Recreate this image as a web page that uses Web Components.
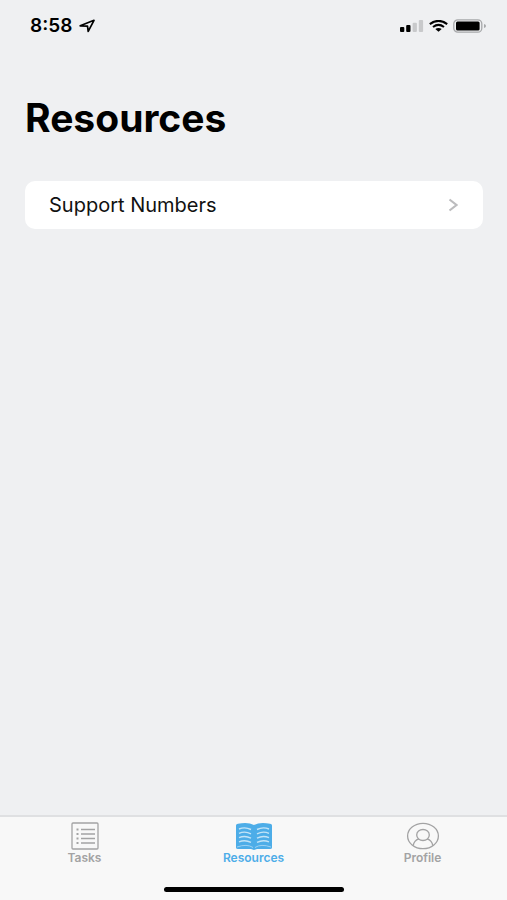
<!DOCTYPE html>
<html lang="en">
<head>
<meta charset="UTF-8">
<meta name="viewport" content="width=device-width, initial-scale=1.0">
<title>Resources</title>
<style>
  body {
    margin: 0;
    background-color: #eff0f2;
    color: #000;
    font-family: Inter, "Liberation Sans", sans-serif;
  }
</style>
</head>
<body>
<app-screen>
  <status-bar slot="status" time="8:58"></status-bar>
  <page-title>Resources</page-title>
  <resource-list>
    <resource-item>Support Numbers</resource-item>
  </resource-list>
  <tab-bar slot="tabs">
    <tab-item icon="tasks">Tasks</tab-item>
    <tab-item icon="resources" active>Resources</tab-item>
    <tab-item icon="profile">Profile</tab-item>
  </tab-bar>
</app-screen>

<script>
const icons = {
  tasks: `
    <svg width="28" height="28" viewBox="0 0 28 28" fill="none" stroke="currentColor" aria-hidden="true">
      <rect x="1" y="1" width="26" height="26" rx="1" stroke-width="1.3"/>
      <path d="M10 7.5h14M10 12h14M10 16.5h14M10 21h14" stroke-width="1.3"/>
      <path d="M5.5 7.5h2M5.5 12h2M5.5 16.5h2M5.5 21h2" stroke-width="2"/>
    </svg>`,
  resources: `
    <svg width="38" height="28" viewBox="0 0 38 28" fill="none" aria-hidden="true">
      <path d="M1 3.5Q1 2 3 1.7Q13-.4 19 3Q25-.4 35 1.7Q37 2 37 3.5V25.5Q37 27 35 27H22L19 28L16 27H3Q1 27 1 25.5Z" fill="currentColor"/>
      <path d="M2 25Q12 21.5 18 25.5M36 25Q26 21.5 20 25.5" stroke="#9ed2f3"/>
      <path d="M4 7Q10 4.5 16 7.5M4 11.3Q10 8.8 16 11.8M4 15.6Q10 13.1 16 16.1M4 19.9Q10 17.4 16 20.4M22 7.5Q28 4.5 34 7M22 11.8Q28 8.8 34 11.3M22 16.1Q28 13.1 34 15.6M22 20.4Q28 17.4 34 19.9" stroke="#c4e4f7" stroke-width="1.4"/>
    </svg>`,
  profile: `
    <svg width="34" height="28" viewBox="0 0 34 28" fill="none" stroke="currentColor" stroke-width="1.3" aria-hidden="true">
      <ellipse cx="17" cy="14" rx="15.4" ry="12.7"/>
      <ellipse cx="17" cy="13" rx="6.3" ry="5.5"/>
      <path d="M7.2 23.7Q8 18.3 12.8 16.8M26.8 23.7Q26 18.3 21.2 16.8"/>
    </svg>`,
};

class AppScreen extends HTMLElement {
  constructor() {
    super();
    this.attachShadow({ mode: "open" });
    this.shadowRoot.innerHTML = `
      <style>
        :host {
          display: flex;
          flex-direction: column;
          min-height: 100vh;
        }

        main {
          flex: 1;
          padding: 0 24px 0 25px;
        }
      </style>

      <slot name="status"></slot>
      <main><slot></slot></main>
      <slot name="tabs"></slot>
    `;
  }
}

customElements.define("app-screen", AppScreen);

class StatusBar extends HTMLElement {
  constructor() {
    super();
    this.attachShadow({ mode: "open" });
    this.shadowRoot.innerHTML = `
      <style>
        :host {
          display: flex;
          align-items: center;
          justify-content: space-between;
          height: 52px;
          padding: 0 21px 0 30px;
        }

        .group {
          display: flex;
          align-items: center;
          gap: 5px;
        }

        .clock {
          gap: 7px;
        }

        time {
          font-size: 19px;
          line-height: 24px;
          font-weight: 600;
        }

        svg {
          display: block;
        }
      </style>

      <div class="group clock">
        <time>${this.getAttribute("time")}</time>
        <svg width="17" height="14" viewBox="0 0 17 14" role="img" aria-label="Location in use">
          <path d="M1.2 6.8L15 1.3L9.2 12.4L8.5 7.2Z" fill="none" stroke="#000" stroke-width="1.7" stroke-linejoin="round"/>
        </svg>
      </div>
      <div class="group">
        <svg width="24" height="12" viewBox="0 0 24 12" role="img" aria-label="Signal, two of four bars">
          <rect x="0" y="7" width="4.3" height="5" rx="1"/>
          <rect x="6.2" y="5" width="4.3" height="7" rx="1"/>
          <rect x="12.6" y="2.7" width="4.3" height="9.3" rx="1" fill="#c8c9cb"/>
          <rect x="18.8" y="0" width="4.3" height="12" rx="1" fill="#c8c9cb"/>
        </svg>
        <svg width="19" height="12" viewBox="0 0 19 12" role="img" aria-label="Wi-Fi">
          <path d="M.8 4.1Q9.5-2.3 18.2 4.1M4 7Q9.5 2.8 15 7" fill="none" stroke="#000" stroke-width="2.1"/>
          <path d="M6.3 9Q9.5 6.8 12.7 9L9.5 11.8Z"/>
        </svg>
        <svg width="33" height="14" viewBox="0 0 33 14" role="img" aria-label="Battery full">
          <rect x=".8" y=".8" width="28" height="12.4" rx="4" fill="none" stroke="#a7a8aa" stroke-width="1.3"/>
          <rect x="3" y="2.6" width="23.6" height="8.8" rx="1.5"/>
          <path d="M31 5Q33 5.5 33 7T31 9Z" fill="#a7a8aa"/>
        </svg>
      </div>
    `;
  }
}

customElements.define("status-bar", StatusBar);

class PageTitle extends HTMLElement {
  constructor() {
    super();
    this.attachShadow({ mode: "open" });
    this.shadowRoot.innerHTML = `
      <style>
        :host {
          display: block;
          padding: 42px 0 39px;
        }

        h1 {
          margin: 0;
          font-size: 39px;
          line-height: 48px;
          font-weight: 700;
        }
      </style>

      <h1><slot></slot></h1>
    `;
  }
}

customElements.define("page-title", PageTitle);

class ResourceList extends HTMLElement {
  constructor() {
    super();
    this.attachShadow({ mode: "open" });
    this.shadowRoot.innerHTML = `
      <style>
        :host {
          display: block;
          overflow: hidden;
          border-radius: 10px;
          background-color: #fff;
        }
      </style>

      <slot></slot>
    `;
  }
}

customElements.define("resource-list", ResourceList);

class ResourceItem extends HTMLElement {
  constructor() {
    super();
    this.attachShadow({ mode: "open" });
    this.shadowRoot.innerHTML = `
      <style>
        :host {
          display: block;
        }

        button {
          display: flex;
          align-items: center;
          justify-content: space-between;
          width: 100%;
          padding: 12px 24px;
          border: none;
          background: none;
          color: #111;
          font: inherit;
          font-size: 20px;
          line-height: 24px;
          text-align: left;
          cursor: pointer;
        }

        svg {
          flex: none;
        }
      </style>

      <button type="button">
        <span><slot></slot></span>
        <svg width="11" height="14" viewBox="0 0 11 14" aria-hidden="true">
          <path d="M1.5 1.5L8.5 7L1.5 12.5" fill="none" stroke="#bcbcbe" stroke-width="2.2"/>
        </svg>
      </button>
    `;
  }
}

customElements.define("resource-item", ResourceItem);

class TabBar extends HTMLElement {
  constructor() {
    super();
    this.attachShadow({ mode: "open" });
    this.shadowRoot.innerHTML = `
      <style>
        :host {
          display: block;
          border-top: 2px solid #dfe0e2;
          background-color: #f8f8f8;
        }

        nav {
          display: grid;
          grid-template-columns: repeat(3, 1fr);
          padding-top: 5px;
        }

        .home-indicator {
          width: 180px;
          height: 5px;
          margin: 22px auto 8px;
          border-radius: 3px;
          background-color: #000;
        }
      </style>

      <nav aria-label="Main"><slot></slot></nav>
      <div class="home-indicator"></div>
    `;
  }
}

customElements.define("tab-bar", TabBar);

class TabItem extends HTMLElement {
  constructor() {
    super();
    this.attachShadow({ mode: "open" });
    this.render();
  }

  render() {
    const icon = icons[this.getAttribute("icon")] || "";
    const current = this.hasAttribute("active") ? 'aria-current="page"' : "";

    this.shadowRoot.innerHTML = `
      <style>
        :host {
          display: block;
          color: #a3a3a4;
        }

        :host([active]) {
          color: #4dade8;
        }

        a {
          display: flex;
          flex-direction: column;
          align-items: center;
          gap: 1px;
          color: inherit;
          font-size: 12px;
          line-height: 14px;
          font-weight: 600;
          text-decoration: none;
        }
      </style>

      <a href="#${this.getAttribute("icon")}" ${current}>
        ${icon}
        <span><slot></slot></span>
      </a>
    `;
  }
}

customElements.define("tab-item", TabItem);
</script>
</body>
</html>
